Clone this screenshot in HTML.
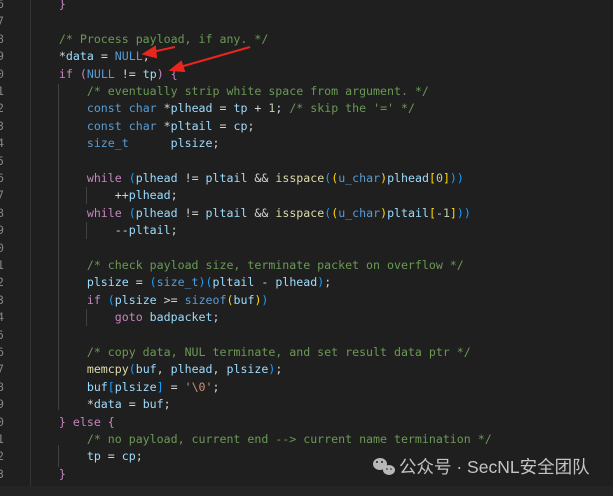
<!DOCTYPE html>
<html><head><meta charset="utf-8"><style>
body{margin:0;width:613px;height:496px;background:#1f1f1f;overflow:hidden;position:relative;font-family:"DejaVu Sans Mono","Liberation Mono",monospace;}
.l{position:absolute;left:31px;height:17.4px;line-height:17.4px;font-size:11.6px;white-space:pre;color:#9cdcfe;}
.n{position:absolute;left:-3px;height:17.4px;line-height:17.4px;font-size:11.6px;color:#858585;}
.c{color:#6a9955}.k{color:#569cd6}.p{color:#c586c0}.f{color:#dcdcaa}.s{color:#ce9178}.m{color:#b5cea8}.w{color:#d4d4d4}.t{color:#4ec9b0}.y{color:#ffd700}.b{color:#179fff}
.g{position:absolute;width:1px;background:#404040}
</style></head><body>
<div style="position:absolute;left:30px;top:0;width:1px;height:486px;background:#333"></div>
<div style="position:absolute;left:0;top:486px;width:613px;height:10px;background:#242424"></div>
<div class="g" style="left:58px;top:84px;height:326px"></div>
<div class="g" style="left:58px;top:445px;height:22px"></div>
<div class="g" style="left:86px;top:187px;height:17px"></div>
<div class="g" style="left:86px;top:222px;height:17px"></div>
<div class="g" style="left:86px;top:309px;height:17px"></div>

<div class="n" style="top:-4px">6</div><div class="l" style="top:-4px">    <span class="p">}</span></div>
<div class="n" style="top:13.4px">7</div>
<div class="n" style="top:30.8px">8</div><div class="l" style="top:30.8px">    <span class="c">/* Process payload, if any. */</span></div>
<div class="n" style="top:48.2px">9</div><div class="l" style="top:48.2px">    <span class="w">*</span>data <span class="w">=</span> <span class="k">NULL</span><span class="w">;</span></div>
<div class="n" style="top:65.6px">0</div><div class="l" style="top:65.6px">    <span class="p">if</span> <span class="p">(</span><span class="k">NULL</span> <span class="w">!=</span> tp<span class="p">)</span> <span class="p">{</span></div>
<div class="n" style="top:83px">1</div><div class="l" style="top:83px">        <span class="c">/* eventually strip white space from argument. */</span></div>
<div class="n" style="top:100.4px">2</div><div class="l" style="top:100.4px">        <span class="k">const</span> <span class="k">char</span> <span class="w">*</span>plhead <span class="w">=</span> tp <span class="w">+</span> <span class="m">1</span><span class="w">;</span> <span class="c">/* skip the '=' */</span></div>
<div class="n" style="top:117.8px">3</div><div class="l" style="top:117.8px">        <span class="k">const</span> <span class="k">char</span> <span class="w">*</span>pltail <span class="w">=</span> cp<span class="w">;</span></div>
<div class="n" style="top:135.2px">4</div><div class="l" style="top:135.2px">        <span class="k">size_t</span>      plsize<span class="w">;</span></div>
<div class="n" style="top:152.6px">5</div>
<div class="n" style="top:170px">6</div><div class="l" style="top:170px">        <span class="p">while</span> <span class="b">(</span>plhead <span class="w">!=</span> pltail <span class="w">&amp;&amp;</span> <span class="f">isspace</span><span class="b">(</span><span class="y">(</span><span class="k">u_char</span><span class="y">)</span>plhead<span class="y">[</span><span class="m">0</span><span class="y">]</span><span class="b">))</span></div>
<div class="n" style="top:187.4px">7</div><div class="l" style="top:187.4px">            <span class="w">++</span>plhead<span class="w">;</span></div>
<div class="n" style="top:204.8px">8</div><div class="l" style="top:204.8px">        <span class="p">while</span> <span class="b">(</span>plhead <span class="w">!=</span> pltail <span class="w">&amp;&amp;</span> <span class="f">isspace</span><span class="b">(</span><span class="y">(</span><span class="k">u_char</span><span class="y">)</span>pltail<span class="y">[</span><span class="w">-</span><span class="m">1</span><span class="y">]</span><span class="b">))</span></div>
<div class="n" style="top:222.2px">9</div><div class="l" style="top:222.2px">            <span class="w">--</span>pltail<span class="w">;</span></div>
<div class="n" style="top:239.6px">0</div>
<div class="n" style="top:257px">1</div><div class="l" style="top:257px">        <span class="c">/* check payload size, terminate packet on overflow */</span></div>
<div class="n" style="top:274.4px">2</div><div class="l" style="top:274.4px">        plsize <span class="w">=</span> <span class="b">(</span><span class="k">size_t</span><span class="b">)(</span>pltail <span class="w">-</span> plhead<span class="b">)</span><span class="w">;</span></div>
<div class="n" style="top:291.8px">3</div><div class="l" style="top:291.8px">        <span class="p">if</span> <span class="b">(</span>plsize <span class="w">&gt;=</span> <span class="k">sizeof</span><span class="y">(</span>buf<span class="y">)</span><span class="b">)</span></div>
<div class="n" style="top:309.2px">4</div><div class="l" style="top:309.2px">            <span class="p">goto</span> badpacket<span class="w">;</span></div>
<div class="n" style="top:326.6px">5</div>
<div class="n" style="top:344px">6</div><div class="l" style="top:344px">        <span class="c">/* copy data, NUL terminate, and set result data ptr */</span></div>
<div class="n" style="top:361.4px">7</div><div class="l" style="top:361.4px">        <span class="f">memcpy</span><span class="b">(</span>buf<span class="w">,</span> plhead<span class="w">,</span> plsize<span class="b">)</span><span class="w">;</span></div>
<div class="n" style="top:378.8px">8</div><div class="l" style="top:378.8px">        buf<span class="b">[</span>plsize<span class="b">]</span> <span class="w">=</span> <span class="s">'\0'</span><span class="w">;</span></div>
<div class="n" style="top:396.2px">9</div><div class="l" style="top:396.2px">        <span class="w">*</span>data <span class="w">=</span> buf<span class="w">;</span></div>
<div class="n" style="top:413.6px">0</div><div class="l" style="top:413.6px">    <span class="p">}</span> <span class="p">else</span> <span class="p">{</span></div>
<div class="n" style="top:431px">1</div><div class="l" style="top:431px">        <span class="c">/* no payload, current end --&gt; current name termination */</span></div>
<div class="n" style="top:448.4px">2</div><div class="l" style="top:448.4px">        tp <span class="w">=</span> cp<span class="w">;</span></div>
<div class="n" style="top:465.8px">3</div><div class="l" style="top:465.8px">    <span class="p">}</span></div>

<svg style="position:absolute;left:0;top:0" width="613" height="496">
<g stroke="#e8261d" stroke-width="2" fill="#e8261d">
<line x1="175" y1="47" x2="152" y2="52"/><polygon points="144,54 155,47 156,57"/>
<line x1="250" y1="47" x2="180" y2="67"/><polygon points="171,70 181,62 184,71"/>
</g>
<g fill="#b8b8b8"><ellipse cx="380" cy="464" rx="7" ry="6"/><ellipse cx="389" cy="470" rx="6" ry="5"/></g>
<g fill="#1f1f1f"><circle cx="377" cy="462" r="1"/><circle cx="382" cy="462" r="1"/><circle cx="387" cy="469" r="0.8"/><circle cx="391" cy="469" r="0.8"/></g>
</svg>
<div style="position:absolute;left:399px;top:456px;font-family:'Liberation Sans','Noto Sans CJK SC',sans-serif;font-size:17.5px;color:#c4c4c4;line-height:22px;white-space:nowrap">公众号 · SecNL安全团队</div>
</body></html>
